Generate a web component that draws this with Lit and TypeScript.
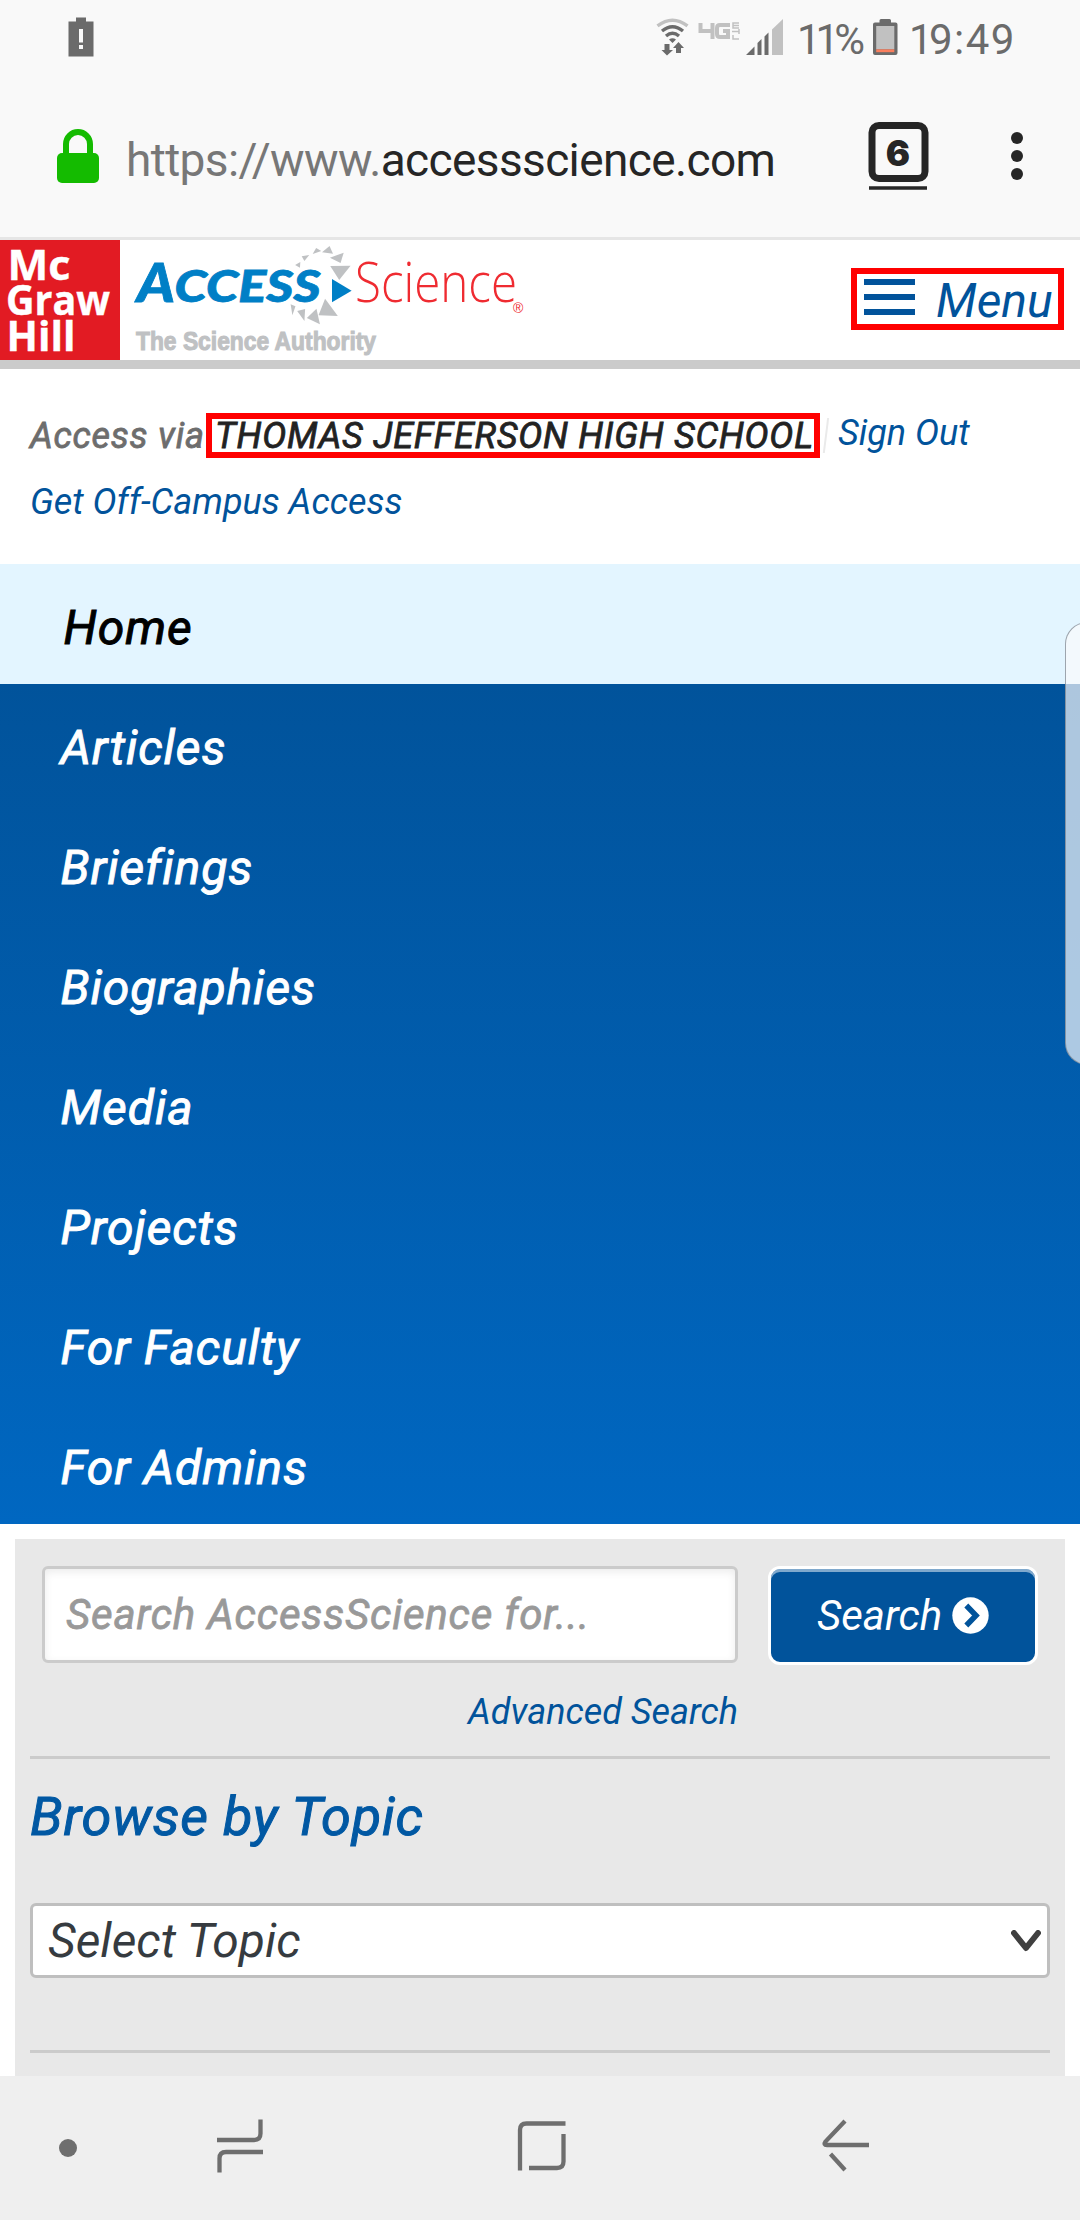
import { LitElement, html, css, svg } from "lit";
import { customElement, property } from "lit/decorators.js";

@customElement("status-bar")
class StatusBar extends LitElement {
  static styles = css`
    :host { display: block; height: 76px; }
    .bar { display: flex; align-items: flex-start; height: 76px; }
    .alert { width: 26px; height: 42px; margin: 17px 0 0 68px; }
    .signals { width: 130px; height: 40px; margin: 18px 0 0 auto; }
    .battery { width: 25px; height: 37px; margin: 19px 11px 0 8px; }
    .num { font: 400 42px/50px Roboto, sans-serif; color: #6b6b6b; padding-top: 15px; white-space: nowrap; }
    .pct { width: 68px; margin-left: 12px; }
    .time { width: 171px; letter-spacing: 1.4px; }
    .tight { letter-spacing: -5px; }
    .snug { letter-spacing: -3.5px; }
  `;
  render() {
    return html`<div class="bar">
      <svg class="alert" viewBox="0 0 26 42"><path fill="#6b6b6b" fill-rule="evenodd" d="M8 .5H18V4.5H25.5V39.5H.5V4.5H8ZM11 12V25.5H15V12ZM11 28V32H15V28Z"/></svg>
      <svg class="signals" viewBox="0 0 130 40">
        <g fill="none">
          <path stroke="#c1c1c1" stroke-width="3.4" d="M2.500 7.800Q17.500 -3.500 32.500 7.800"/>
          <g stroke="#6b6b6b" stroke-width="3.400"><path d="M7 13Q17.500 4.500 28 13"/><path d="M11 18Q17.500 12.500 24 18"/></g>
        </g>
        <path fill="#6b6b6b" d="M14 21.500Q17.500 19 21 21.500L17.500 25ZM9.500 26H14.500V32H18L12 37.500L6.500 32H9.500ZM23.500 24L29 30H26V35H21V30H18Z"/>
        <g fill="none" stroke="#c1c1c1" stroke-width="4"><path d="M45.500 5V13H57.500M57.500 5V21"/><path d="M75 7H65Q62 7 62 10V16Q62 19 65 19H73V13H68"/></g>
        <g fill="none" stroke="#c1c1c1" stroke-width="1.500"><path d="M84 5H78V10H84M78 7.500H84"/><path d="M77 13.500H84M84 11V16"/><path d="M78 17V21H84"/></g>
        <path fill="#6b6b6b" d="M91 37L99.500 28.500V37ZM102.500 37V25L106.500 21V37ZM109.500 37V18.500L113.500 14.500V37Z"/>
        <path fill="#c1c1c1" d="M117 37V11.500L128 1V37Z"/>
      </svg>
      <div class="num pct"><span class="tight">11</span>%</div>
      <svg class="battery" viewBox="0 0 25 37"><path fill="#6b6b6b" d="M6.500 1.500Q6.500 0 8 0H16.500Q18 0 18 1.500V3.500H22.500Q24.500 3.500 24.500 5.500V34Q24.500 36 22.500 36H2Q0 36 0 34V5.500Q0 3.500 2 3.500H6.500Z"/><path fill="#c1c1c1" d="M3.200 7H21.300V30.300H3.200Z"/><path fill="#fa7f5e" d="M3.200 30.300H21.300V33.200H3.200Z"/></svg>
      <div class="num time"><span class="snug">1</span>9:49</div>
    </div>`;
  }
}

@customElement("address-bar")
class AddressBar extends LitElement {
  static styles = css`
    :host { display: block; }
    .bar { display: flex; align-items: flex-start; height: 161px; border-bottom: 3px solid #e6e6e6; }
    .lock { width: 42px; height: 55px; margin: 53px 0 0 57px; }
    .url { margin: 54px 0 0 27px; font: 400 46px/60px Roboto, sans-serif; color: #777; white-space: nowrap; letter-spacing: -.62px; }
    .domain { color: #262626; }
    .tabs { width: 61px; height: 70px; margin: 45px 0 0 auto; }
    .more { width: 12px; height: 50px; margin: 55px 57px 0 82px; }
    .count { font: 900 36px Inter, Roboto, sans-serif; }
  `;
  render() {
    return html`<div class="bar">
      <svg class="lock" viewBox="0 0 42 55"><rect y="24" width="42" height="30" rx="5" fill="#14bb00"/><path d="M9 26V15A12 12 0 0 1 33 15V26" fill="none" stroke="#14bb00" stroke-width="6"/></svg>
      <div class="url">https://www.<span class="domain">accessscience.com</span></div>
      <svg class="tabs" viewBox="0 0 61 70"><rect x="4" y="4.500" width="53" height="53" rx="7" fill="none" stroke="#262626" stroke-width="7"/><path d="M1 67H59" stroke="#262626" stroke-width="3.500"/><text class="count" x="30" y="45" text-anchor="middle" fill="#262626">6</text></svg>
      <svg class="more" viewBox="0 0 12 50"><g fill="#262626"><circle cx="6" cy="7" r="6"/><circle cx="6" cy="25" r="6"/><circle cx="6" cy="43" r="6"/></g></svg>
    </div>`;
  }
}

@customElement("site-header")
class SiteHeader extends LitElement {
  static styles = css`
    :host { display: block; }
    .head { display: flex; align-items: flex-start; justify-content: space-between; height: 120px; border-bottom: 9px solid #cbcbcb; background: #fff; }
    .logo { width: 540px; height: 120px; }
    .menu { box-sizing: border-box; width: 213px; height: 62px; margin: 28px 16px 0 0; border: 6px solid #f00; display: flex; gap: 21px; }
    .bars { display: grid; gap: 9px; align-content: start; padding: 5px 0 0 7px; }
    .line { width: 51px; height: 6px; background: #01539b; }
    .label { font: italic 400 48px/50px Roboto, sans-serif; color: #01539b; margin-top: 2px; }
    .mgh { font: 700 41.5px "Open Sans", sans-serif; }
    .acc { font: italic 900 53px Lato, sans-serif; }
    .small { font-size: 44px; }
    .sci { font: 300 56px "Open Sans", sans-serif; }
    .tag { font: 700 26.5px "Liberation Sans", sans-serif; }
    .reg { font: 400 14px "Liberation Sans", sans-serif; }
  `;
  render() {
    const triangles = [
      "857,105 872,96 871,113", "876,79 898,75 884,93", "908,72 918,54 933,63",
      "935,67 957,48 967,71", "958,83 998,68 989,99", "959,108 1018,107 985,150",
      "844,223 858,229 849,256", "863,243 886,237 884,273", "891,264 919,236 929,283", "925,256 944,206 981,258",
    ];
    return html`<div class="head">
      <svg class="logo" viewBox="0 0 540 120">
        <rect width="120" height="120" fill="#e21b23"/>
        <g class="mgh" fill="#fff" stroke="#fff" stroke-width=".4">
          <text x="7.500" y="39.500" textLength="63" lengthAdjust="spacingAndGlyphs">Mc</text>
          <text x="6" y="75" textLength="104" lengthAdjust="spacingAndGlyphs">Graw</text>
          <text x="6.500" y="111" textLength="69" lengthAdjust="spacingAndGlyphs">Hill</text>
        </g>
        <g transform="scale(.34437 .33333) translate(0 -30)">
          ${triangles.map((p) => svg`<polygon points=${p} fill="#bfc1c3"/>`)}
          <polygon points="964,147 1021,182 964,217" fill="#007fc6"/>
        </g>
        <g class="acc" fill="#007fc6" stroke="#007fc6" stroke-width=".8">
          <text x="137" y="62.300" textLength="38" lengthAdjust="spacingAndGlyphs">A</text>
          <text class="small" x="174.500" y="62.300" textLength="146" lengthAdjust="spacingAndGlyphs">CCESS</text>
        </g>
        <text class="sci" x="355" y="62" fill="#ef2b31" textLength="162" lengthAdjust="spacingAndGlyphs">Science</text>
        <text class="reg" x="513" y="72.500" fill="#ef2b31">®</text>
        <text class="tag" x="136" y="109.500" fill="#bfc1c3" stroke="#bfc1c3" stroke-width="1.100" textLength="240" lengthAdjust="spacingAndGlyphs">The Science Authority</text>
      </svg>
      <div class="menu">
        <div class="bars"><div class="line"></div><div class="line"></div><div class="line"></div></div>
        <div class="label">Menu</div>
      </div>
    </div>`;
  }
}

@customElement("access-info")
class AccessInfo extends LitElement {
  static styles = css`
    :host { display: block; }
    .info { height: 195px; background: #fff; font: italic 400 36px/45px Roboto, sans-serif; color: #01539b; box-sizing: border-box; padding: 44px 0 0 30px; white-space: nowrap; }
    .row { display: flex; height: 45px; }
    .via { width: 176px; color: #6d6d6d; padding-top: 1px; }
    .via, .school { letter-spacing: .75px; -webkit-text-stroke: .8px; }
    .school { box-sizing: border-box; width: 614px; height: 45px; border: 6px solid #f00; color: #222; line-height: 35px; padding-left: 3px; }
    .sep { width: 2px; height: 35px; background: #eaeaea; margin: 5px 0 0 5px; transform: skewX(-7deg); }
    .out { margin: -2px 0 0 11px; }
    .campus { margin-top: 22px; }
  `;
  render() {
    return html`<div class="info">
      <div class="row"><div class="via">Access via</div><div class="school">THOMAS JEFFERSON HIGH SCHOOL</div><div class="sep"></div><div class="out">Sign Out</div></div>
      <div class="campus">Get Off-Campus Access</div>
    </div>`;
  }
}

@customElement("nav-menu")
class NavMenu extends LitElement {
  static styles = css`
    :host { display: block; position: relative; overflow: hidden; font: italic 400 48px/127px Roboto, sans-serif; letter-spacing: .95px; -webkit-text-stroke: 1px; }
    .home { height: 120px; background: #e3f5ff; color: #000; padding-left: 63.5px; }
    .items { background: linear-gradient(#01539b, #0067c1); color: #fff; }
    .item { height: 120px; padding-left: 60.5px; }
    .edge { position: absolute; left: 1065px; top: 58px; width: 60px; height: 443px; box-sizing: border-box; border: 1.500px solid rgba(110, 120, 130, .65); border-radius: 22px; background: rgba(251, 251, 252, .69); }
  `;
  @property({ attribute: false }) items = ["Articles", "Briefings", "Biographies", "Media", "Projects", "For Faculty", "For Admins"];
  render() {
    return html`<div class="home">Home</div>
      <div class="items">${this.items.map((i) => html`<div class="item">${i}</div>`)}</div>
      <div class="edge"></div>`;
  }
}

@customElement("search-panel")
class SearchPanel extends LitElement {
  static styles = css`
    :host { display: block; }
    .panel { margin: 15px 15px 0; height: 537px; background: #e8e8e8; box-sizing: border-box; padding: 27px 15px 0; font: italic 400 36px/45px Roboto, sans-serif; color: #01539b; }
    .row { display: flex; gap: 30px; padding-left: 12px; height: 99px; }
    .input { box-sizing: border-box; width: 696px; height: 97px; border: 3px solid #cbcbcb; border-radius: 6px; background: #fff; box-shadow: inset 0 3px 9px rgba(0, 0, 0, .08); color: #999; font-size: 42px; letter-spacing: .82px; -webkit-text-stroke: .8px; line-height: 92px; padding-left: 21px; white-space: nowrap; }
    .button { box-sizing: border-box; width: 270px; height: 99px; border: 3px solid #fff; border-radius: 12px; background: #01539b; box-shadow: inset 0 3px 0 #80a9cd; color: #fff; font-size: 42px; line-height: 94px; display: flex; padding-left: 46px; gap: 10px; }
    .go { width: 37px; height: 37px; margin-top: 28px; }
    .advanced { width: 708px; text-align: right; margin-top: 25px; height: 66px; }
    .rule { height: 3px; background: #cbcbcb; }
    .title { font-size: 54px; letter-spacing: .82px; -webkit-text-stroke: 1px; line-height: 60px; height: 116px; padding-top: 28px; color: #0158a3; }
    .select { box-sizing: border-box; height: 75px; border: 3px solid #bfbfbf; border-radius: 6px; background: #fff; display: flex; justify-content: space-between; padding: 0 6px 0 15px; margin-bottom: 72px; font-size: 48px; line-height: 69px; color: #363b40; }
    .chev { width: 30px; height: 22px; margin-top: 24px; }
  `;
  render() {
    return html`<div class="panel">
      <div class="row">
        <div class="input">Search AccessScience for...</div>
        <div class="button"><span>Search</span><svg class="go" viewBox="0 0 37 37"><circle cx="18.500" cy="18.500" r="18.200" fill="#fff"/><path d="M14.300 8.500L24 18.500L14.300 28.500" fill="none" stroke="#01539b" stroke-width="5.500"/></svg></div>
      </div>
      <div class="advanced">Advanced Search</div>
      <div class="rule"></div>
      <div class="title">Browse by Topic</div>
      <div class="select"><span>Select Topic</span><svg class="chev" viewBox="0 0 30 22"><path d="M3 3L15 18L27 3" fill="none" stroke="#404040" stroke-width="6" stroke-linecap="round" stroke-linejoin="round"/></svg></div>
      <div class="rule"></div>
    </div>`;
  }
}

@customElement("system-nav")
class SystemNav extends LitElement {
  static styles = css`
    :host { display: block; }
    .bar { height: 144px; background: #efefef; display: flex; align-items: flex-start; }
    .dot { width: 18px; height: 18px; border-radius: 50%; background: #6e6e6e; margin: 63px 0 0 59px; }
    .recent { width: 46px; height: 54px; margin: 43px 0 0 140px; }
    .home { width: 50px; height: 50px; margin: 45px 0 0 254px; }
    .back { width: 48px; height: 54px; margin: 43px 0 0 254px; }
  `;
  render() {
    return html`<div class="bar">
      <div class="dot"></div>
      <svg class="recent" viewBox="0 0 46 54" fill="none" stroke="#6e6e6e" stroke-width="4.300"><path d="M0 21H37Q43.500 21 43.500 14.500V0.500"/><path d="M46 33H9Q2.500 33 2.500 39.500V53.500"/></svg>
      <svg class="home" viewBox="0 0 50 50" fill="none" stroke="#6e6e6e" stroke-width="4.300"><path d="M3 49.500V9Q3 2.500 9.500 2.500H48.500"/><path d="M12 47H40Q46.500 47 46.500 40.500V13"/></svg>
      <svg class="back" viewBox="0 0 48 54" fill="none" stroke="#6e6e6e" stroke-width="4.300"><path d="M24 2L4.500 22.500Q2 26 6 26H48"/><path d="M9.500 35L24 51"/></svg>
    </div>`;
  }
}

@customElement("app-root")
class AppRoot extends LitElement {
  static styles = css`
    :host { display: block; width: 1080px; height: 2220px; overflow: hidden; background: #fff; }
    .top { background: #f9f9f9; }
  `;
  render() {
    return html`<div class="top"><status-bar></status-bar><address-bar></address-bar></div>
      <site-header></site-header><access-info></access-info><nav-menu></nav-menu><search-panel></search-panel><system-nav></system-nav>`;
  }
}
